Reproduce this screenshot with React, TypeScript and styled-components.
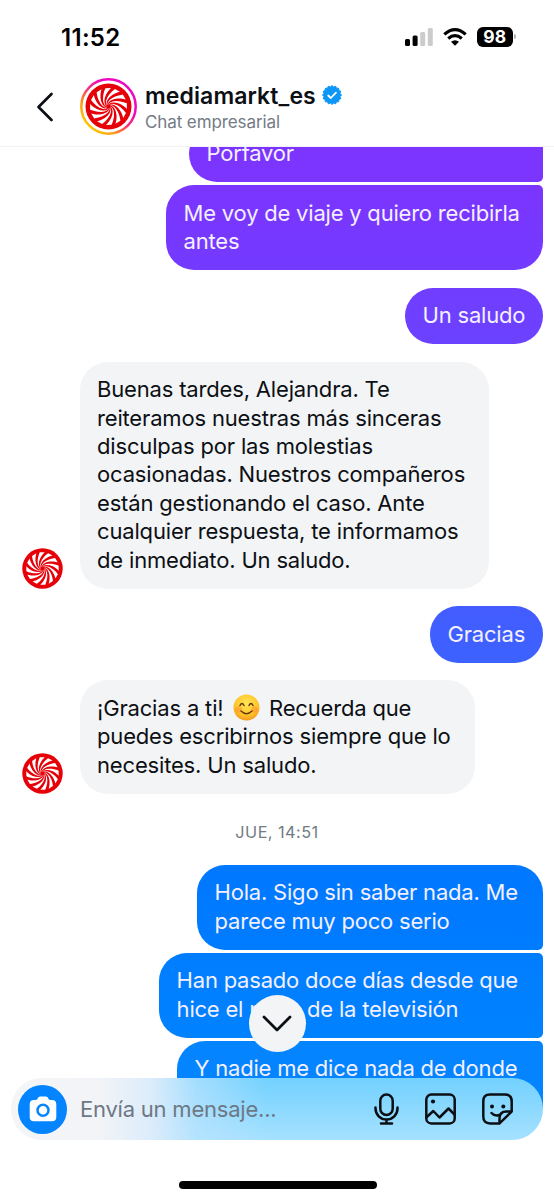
import React from 'react';
import styled, { createGlobalStyle } from 'styled-components';

const Global = createGlobalStyle`
  * { box-sizing: border-box; }
  body { margin: 0; background: #fff; font-family: Inter, "Liberation Sans", sans-serif; color: #0c1014; }
`;

const Screen = styled.main`
  position: relative;
  width: 554px;
  height: 1200px;
  overflow: hidden;
  background: #fff;
  display: flex;
  flex-direction: column;
`;

const StatusBar = styled.div`
  height: 73px;
  padding: 0 38.5px 0 61px;
  display: flex;
  align-items: center;
  justify-content: space-between;
  flex: none;
`;

const Clock = styled.span`
  font-size: 24px;
  font-weight: 600;
  letter-spacing: 0.3px;
  line-height: 30px;
  padding-top: 3px;
  color: #000;
`;

const StatusIcons = styled.div`
  display: flex;
  align-items: center;
  gap: 10px;
`;

const Battery = styled.span`
  display: flex;
  align-items: center;
  gap: 1.5px;
  &::after { content: ''; width: 1.5px; height: 5px; border-radius: 0 2px 2px 0; background: #b3b3b3; }
`;

const BatteryLevel = styled.span`
  width: 35.5px;
  height: 20px;
  border-radius: 6px;
  background: #000;
  color: #fff;
  font-size: 17.5px;
  font-weight: 700;
  line-height: 20px;
  text-align: center;
`;

const Header = styled.header`
  height: 74px;
  flex: none;
  display: flex;
  align-items: flex-start;
  border-bottom: 1px solid #f3f3f5;
  padding: 5px 0 0 36px;
`;

const BackIcon = styled.svg`
  margin: 14px 25.5px 0 0;
  flex: none;
`;

const Identity = styled.div`
  padding: 3px 0 0 8.5px;
`;

const NameRow = styled.div`
  display: flex;
  align-items: center;
  gap: 6px;
  height: 29px;
  font-size: 23px;
  font-weight: 600;
  letter-spacing: 0.1px;
`;

const VerifiedBadge = styled.svg`
  margin-bottom: 1px;
`;

const Subtitle = styled.div`
  font-size: 17px;
  line-height: 24px;
  letter-spacing: -0.1px;
  color: #737b85;
`;

const Chat = styled.section`
  height: 960px;
  flex: none;
  overflow: hidden;
  padding: 0 11px 0 22px;
  display: flex;
  flex-direction: column;
`;

const Row = styled.div<{ $own?: boolean; $gap: number }>`
  display: flex;
  flex: none;
  align-items: flex-end;
  gap: 17px;
  justify-content: ${p => (p.$own ? 'flex-end' : 'flex-start')};
  margin-top: ${p => p.$gap}px;
`;

const Bubble = styled.div<{ $width: number; $fill: string; $own?: boolean; $top?: boolean; $bottom?: boolean }>`
  width: ${p => p.$width}px;
  padding: 13.5px 17px 14.6px ${p => (p.$own ? 17.6 : 17)}px;
  font-size: 22px;
  line-height: 28.43px;
  letter-spacing: ${p => (p.$own ? -0.21 : -0.17)}px;
  white-space: nowrap;
  color: ${p => (p.$own ? '#f4f0ff' : '#0c1014')};
  background: ${p => p.$fill};
  border-radius: 28px ${p => (p.$top ? 5 : 28)}px ${p => (p.$bottom ? 5 : 28)}px 28px;
`;

const DateLabel = styled.div`
  flex: none;
  margin-top: 26.5px;
  height: 24px;
  line-height: 24px;
  text-align: center;
  padding-right: 11px;
  font-size: 16.3px;
  letter-spacing: 0.45px;
  color: #737b85;
`;

const Emoji = styled.svg`
  width: 27px;
  height: 27px;
  margin: 0 3px 0 3.5px;
  vertical-align: -5px;
`;

const ScrollDown = styled.button`
  position: absolute;
  left: 248.5px;
  top: 995px;
  width: 57px;
  height: 57px;
  padding: 0;
  border: 0;
  border-radius: 50%;
  background: #f3f4f6;
  display: grid;
  place-items: center;
`;

const Composer = styled.div`
  position: absolute;
  left: 11px;
  top: 1078px;
  width: 532px;
  height: 62px;
  border-radius: 31px;
  background:
    linear-gradient(90deg, #f4f5f7 0, #f3f4f7 85px, #dcecfb 140px, rgba(190, 228, 253, 0.65) 185px, rgba(116, 210, 255, 0) 255px),
    linear-gradient(180deg, #72d1ff, #a6e1ff);
  display: flex;
  align-items: center;
  padding: 0 30px 0 7px;
`;

const CameraButton = styled.span`
  width: 49px;
  height: 49px;
  border-radius: 50%;
  background: #0485ff;
  display: grid;
  place-items: center;
`;

const Placeholder = styled.span`
  flex: 1;
  margin-left: 13px;
  font-size: 22px;
  letter-spacing: -0.22px;
  color: #6d7885;
`;

const Tools = styled.div`
  display: flex;
  align-items: center;
  gap: 26px;
`;

const HomeIndicator = styled.div`
  position: absolute;
  left: 178.5px;
  top: 1181px;
  width: 198px;
  height: 7.5px;
  border-radius: 4px;
  background: #000;
`;

const blades = Array.from({ length: 12 }, (_, i) => i * 30);

// One swirl blade: two logarithmic spiral edges, clockwise from the hub to the rim.
const bladePath = (() => {
  const radii = [2, 3, 4.5, 6.5, 9, 12, 15, 17, 18.6];
  const point = (r: number, offset: number) => {
    const a = ((42 * Math.log(r / 19) + offset) * Math.PI) / 180;
    return `${(r * Math.cos(a)).toFixed(2)} ${(r * Math.sin(a)).toFixed(2)}`;
  };
  const lead = radii.map(r => point(r, 4 + r * 0.26));
  const trail = radii.map(r => point(r, -4 - r * 0.26)).reverse();
  return `M${[...lead, ...trail].join('L')}Z`;
})();

function Logo({ size, ring }: { size: number; ring?: boolean }) {
  return (
    <svg width={size} height={size} viewBox={ring ? '-28.5 -28.5 57 57' : '-23.3 -23.3 46.6 46.6'}>
      {ring && (
        <>
          <defs>
            <linearGradient id="ring" x1="0.1" y1="0.85" x2="0.75" y2="0.15">
              <stop offset="0" stopColor="#ffc800" />
              <stop offset="0.25" stopColor="#ff9a18" />
              <stop offset="0.55" stopColor="#f5307a" />
              <stop offset="0.8" stopColor="#ee08c0" />
            </linearGradient>
          </defs>
          <circle r="27.2" fill="#fff" stroke="url(#ring)" strokeWidth="2.5" />
        </>
      )}
      <circle r="23" fill="#e60008" />
      {blades.map(a => <path key={a} d={bladePath} fill="#fff" transform={`rotate(${a})`} />)}
    </svg>
  );
}

const sealPoints = Array.from({ length: 32 }, (_, i) => {
  const r = i % 2 ? 8.2 : 9.5;
  const a = (i * Math.PI) / 16;
  return `${(r * Math.cos(a)).toFixed(2)},${(r * Math.sin(a)).toFixed(2)}`;
}).join(' ');

export default function App() {
  return (
    <>
      <Global />
      <Screen>
        <StatusBar>
          <Clock>11:52</Clock>
          <StatusIcons>
            <svg width="28" height="18" viewBox="0 0 28 18">
              <rect x="0" y="11" width="5" height="7" rx="1.5" />
              <rect x="7.6" y="7.6" width="5" height="10.4" rx="1.5" />
              <rect x="15.2" y="4" width="5" height="14" rx="1.5" fill="#ccc" />
              <rect x="22.8" y="0" width="5" height="18" rx="1.5" fill="#ccc" />
            </svg>
            <svg width="24" height="18" viewBox="0 0 24 18" fill="none" stroke="#000" strokeWidth="3.2">
              <path d="M1.3 6.4Q12 -3 22.7 6.4" />
              <path d="M5.2 10.5Q12 4.8 18.8 10.5" />
              <path d="M8 13.8Q12 10.7 16 13.8L12 17.8Z" fill="#000" stroke="none" />
            </svg>
            <Battery><BatteryLevel>98</BatteryLevel></Battery>
          </StatusIcons>
        </StatusBar>
        <Header>
          <BackIcon width="18" height="30" viewBox="0 0 18 30" fill="none" stroke="#0c1014" strokeWidth="2.7" strokeLinecap="round" strokeLinejoin="round">
            <path d="M15.5 2L2.5 15L15.5 28" />
          </BackIcon>
          <Logo size={57} ring />
          <Identity>
            <NameRow>
              mediamarkt_es
              <VerifiedBadge width="20" height="20" viewBox="-10 -10 20 20">
                <polygon points={sealPoints} fill="#0c96f8" stroke="#0c96f8" strokeLinejoin="round" />
                <path d="M-3.8 .5L-1.2 3L4 -2.4" fill="none" stroke="#fff" strokeWidth="1.8" strokeLinecap="round" strokeLinejoin="round" />
              </VerifiedBadge>
            </NameRow>
            <Subtitle>Chat empresarial</Subtitle>
          </Identity>
        </Header>
        <Chat>
          <Row $own $gap={-21.4}><Bubble $own $bottom $top $width={354} $fill="#7c34ff">Porfavor</Bubble></Row>
          <Row $own $gap={3}><Bubble $own $top $width={377} $fill="linear-gradient(#7b35ff, #733aff)">Me voy de viaje y quiero recibirla<br />antes</Bubble></Row>
          <Row $own $gap={17.5}><Bubble $own $width={138} $fill="linear-gradient(#713dff, #6b42ff)">Un saludo</Bubble></Row>
          <Row $gap={17.5}>
            <Logo size={41} />
            <Bubble $width={409} $fill="#f3f4f6">
              Buenas tardes, Alejandra. Te<br />reiteramos nuestras más sinceras<br />disculpas por las molestias<br />ocasionadas. Nuestros compañeros<br />están gestionando el caso. Ante<br />cualquier respuesta, te informamos<br />de inmediato. Un saludo.
            </Bubble>
          </Row>
          <Row $own $gap={17.5}><Bubble $own $width={113} $fill="linear-gradient(#435cff, #3c62ff)">Gracias</Bubble></Row>
          <Row $gap={17.5}>
            <Logo size={41} />
            <Bubble $width={395} $fill="#f3f4f6">
              ¡Gracias a ti!{' '}
              <Emoji viewBox="0 0 27 27">
                <defs>
                  <radialGradient id="face" cx="0.5" cy="0.35" r="0.65">
                    <stop offset="0" stopColor="#ffe65a" />
                    <stop offset="0.65" stopColor="#ffc82c" />
                    <stop offset="1" stopColor="#f59a1c" />
                  </radialGradient>
                </defs>
                <circle cx="13.5" cy="13.5" r="13" fill="url(#face)" />
                <circle cx="5.5" cy="15.5" r="3.2" fill="#ff7a30" opacity="0.4" />
                <circle cx="21.5" cy="15.5" r="3.2" fill="#ff7a30" opacity="0.4" />
                <path d="M7 11.5Q9 7.5 11 11.5M16 11.5Q18 7.5 20 11.5M8 17Q13.5 22.5 19 17" fill="none" stroke="#6b3a0c" strokeWidth="1.5" strokeLinecap="round" />
              </Emoji>
              {' '}Recuerda que<br />puedes escribirnos siempre que lo<br />necesites. Un saludo.
            </Bubble>
          </Row>
          <DateLabel>JUE, 14:51</DateLabel>
          <Row $own $gap={20.5}><Bubble $own $bottom $width={346} $fill="linear-gradient(#0078ff, #007cff)">Hola. Sigo sin saber nada. Me<br />parece muy poco serio</Bubble></Row>
          <Row $own $gap={3}><Bubble $own $top $bottom $width={384} $fill="linear-gradient(#007dff, #0082ff)">Han pasado doce días desde que<br />hice el pago de la televisión</Bubble></Row>
          <Row $own $gap={3}><Bubble $own $top $bottom $width={366} $fill="#0485ff">Y nadie me dice nada de donde<br />&nbsp;</Bubble></Row>
        </Chat>
        <ScrollDown aria-label="Bajar">
          <svg width="32" height="20" viewBox="0 0 32 20" fill="none" stroke="#0c1014" strokeWidth="2.8" strokeLinecap="round" strokeLinejoin="round">
            <path d="M3 3L16 16L29 3" />
          </svg>
        </ScrollDown>
        <Composer>
          <CameraButton>
            <svg width="28" height="26" viewBox="0 0 28 26">
              <path d="M5 4H7C8.5 4 9 .5 11 .5H17C19 .5 19.5 4 21 4H23Q27.3 4 27.3 8.3V21Q27.3 25.3 23 25.3H5Q.7 25.3 .7 21V8.3Q.7 4 5 4Z" fill="#fff" />
              <circle cx="14" cy="14.2" r="5.5" fill="#fff" stroke="#0485ff" strokeWidth="2.5" />
            </svg>
          </CameraButton>
          <Placeholder>Envía un mensaje...</Placeholder>
          <Tools>
            <svg width="25" height="32" viewBox="0 0 25 32" fill="none" stroke="#0c1014" strokeWidth="2.5" strokeLinecap="round">
              <rect x="6.3" y="1.5" width="12.4" height="20.5" rx="6.2" />
              <path d="M1.5 14.5V15.5A11 11 0 0 0 23.5 15.5V14.5M12.5 26.8V30.5M7 30.5H18" />
            </svg>
            <svg width="31" height="32" viewBox="0 0 31 32" fill="none" stroke="#0c1014" strokeWidth="2.5" strokeLinecap="round" strokeLinejoin="round">
              <rect x="1.3" y="1.6" width="28.4" height="28.8" rx="5" />
              <circle cx="8" cy="8.5" r="2.1" fill="#0c1014" stroke="none" />
              <path d="M1.8 24L8.3 18L14.5 24.5L23.5 15.5L29.5 21.5" />
            </svg>
            <svg width="31" height="32" viewBox="0 0 31 32" fill="none" stroke="#0c1014" strokeWidth="2.5" strokeLinecap="round" strokeLinejoin="round">
              <path d="M17.5 30.4H8Q1.3 30.4 1.3 23.7V8.3Q1.3 1.6 8 1.6H23Q29.7 1.6 29.7 8.3V18.5L17.5 30.4V25.5Q17.5 18.5 24.5 18.5H29.7" />
              <path d="M9.5 20Q12.5 23.5 17.5 22" />
              <circle cx="10" cy="13.5" r="2" fill="#0c1014" stroke="none" />
              <circle cx="21.3" cy="13.5" r="2" fill="#0c1014" stroke="none" />
            </svg>
          </Tools>
        </Composer>
        <HomeIndicator />
      </Screen>
    </>
  );
}
